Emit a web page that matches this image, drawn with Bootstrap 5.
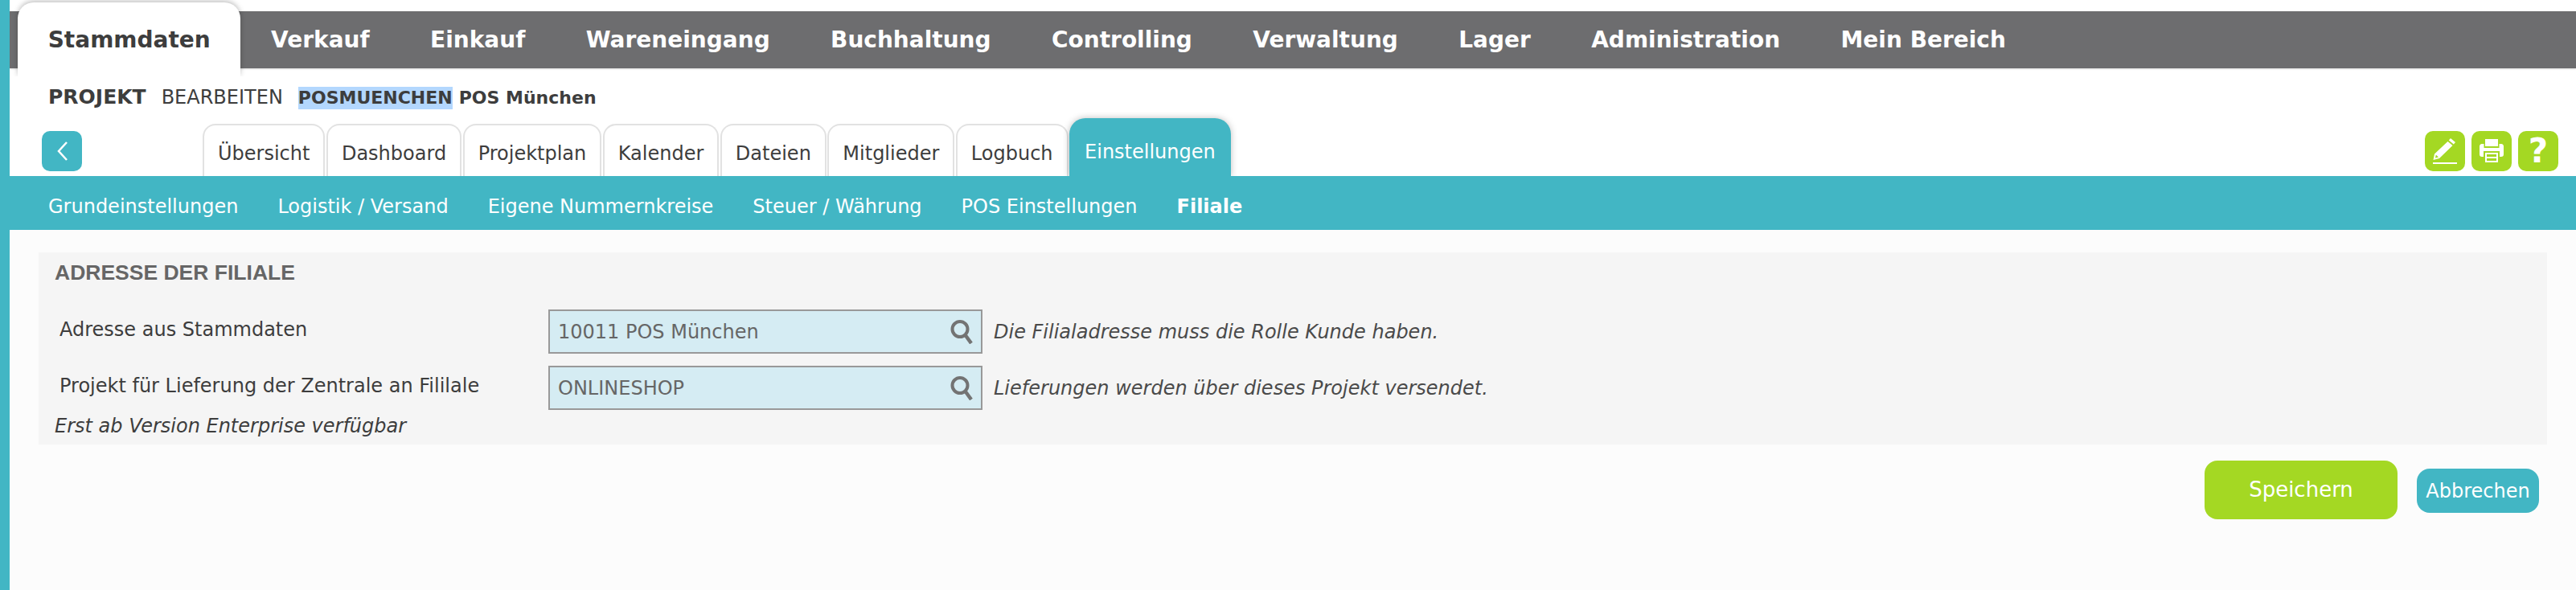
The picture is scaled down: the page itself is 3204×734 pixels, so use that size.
<!DOCTYPE html>
<html lang="de">
<head>
    <meta charset="UTF-8">
    <meta name="viewport" content="width=device-width, initial-scale=1.0">
    <title>Projekt bearbeiten</title>
    <link href="https://cdn.jsdelivr.net/npm/bootstrap@5.3.0/dist/css/bootstrap.min.css" rel="stylesheet">
    <style>
        html, body {
            height: 100%;
        }
        body {
            background-color: #fcfcfc;
            border-left: 12px solid #42b6c4;
            font-family: "DejaVu Sans", Verdana, sans-serif;
            font-size: 24px;
            color: #3d3d3d;
            overflow: hidden;
        }
        .head-zone {
            background-color: #fff;
            height: 219px;
            padding-top: 14px;
        }
        .main-menu {
            background-color: #6d6d6f;
            height: 71px;
            padding-left: 10px;
            box-shadow: 0 1px 2px rgba(0, 0, 0, 0.15);
            flex-wrap: nowrap;
        }
        .main-link {
            color: #fff;
            font-size: 28px;
            font-weight: 700;
            padding: 0 37.7px;
            line-height: 71px;
            text-decoration: none;
            white-space: nowrap;
        }
        .main-link.current {
            background-color: #fff;
            color: #3d3d3d;
            height: 92px;
            margin-top: -11px;
            line-height: 93px;
            border-radius: 20px 20px 0 0;
            box-shadow: 0 -2px 6px rgba(0, 0, 0, 0.25);
            clip-path: inset(-8px -8px 0 -8px);
        }
        .crumb {
            height: 48px;
            margin-top: 22px;
            padding-left: 48px;
            line-height: 28px;
            white-space: nowrap;
            align-items: baseline;
        }
        .crumb-title {
            font-size: 25px;
            font-weight: 700;
            margin-right: 19px;
        }
        .crumb-action {
            margin-right: 19px;
        }
        .crumb-sel {
            background-color: #b3d7fe;
            font-size: 22px;
            font-weight: 700;
            margin-right: 8px;
        }
        .crumb-name {
            font-size: 22px;
            font-weight: 700;
        }
        .tab-row {
            height: 72px;
            margin-top: -8px;
            padding-left: 40px;
            padding-right: 22px;
        }
        .square-btn {
            width: 50px;
            height: 50px;
            border-radius: 10px;
            padding: 0;
            border: 0;
        }
        .square-back {
            background-color: #42b6c4;
            margin-top: 16px;
        }
        .square-green {
            background-color: #a4d823;
            color: #fff;
            font-size: 42px;
            font-weight: 700;
            line-height: 50px;
        }
        .tool-group {
            margin-top: 16px;
        }
        .tab-list {
            margin-left: 150px;
            gap: 1.5px;
        }
        .tab-link {
            height: 65px;
            margin-top: 7px;
            padding: 0 17px;
            line-height: 70px;
            font-size: 24px;
            color: #3d3d3d;
            background-color: #fff;
            text-decoration: none;
            border: 2px solid #e2e2e2;
            border-bottom: 0;
            border-radius: 16px 16px 0 0;
            white-space: nowrap;
        }
        .tab-link.current {
            height: 72px;
            margin-top: 0;
            line-height: 84px;
            background-color: #42b6c4;
            color: #fff;
            border: 0;
            border-radius: 20px 20px 0 0;
            box-shadow: 0 0 8px rgba(0, 0, 0, 0.25);
            clip-path: inset(-8px -8px 0 -8px);
            padding: 0 19px;
        }
        .sub-menu {
            background-color: #42b6c4;
            height: 67px;
            padding-left: 48px;
            padding-top: 8px;
            gap: 49px;
            align-items: center;
        }
        .sub-link {
            color: #fff;
            font-size: 24px;
            text-decoration: none;
            white-space: nowrap;
        }
        .sub-link.current {
            font-weight: 700;
        }
        .form-panel {
            background-color: #f5f5f5;
            margin: 28px 36px 0 36px;
            height: 239px;
            padding: 0 20px;
        }
        .panel-title {
            font-family: "Liberation Sans", Arial, sans-serif;
            font-size: 26.5px;
            font-weight: 700;
            color: #666;
            line-height: 30px;
            padding-top: 10px;
            height: 71px;
            margin: 0;
        }
        .field-row {
            height: 55px;
            margin-bottom: 15px;
        }
        .field-label {
            width: 614px;
            padding-left: 6px;
            margin: -6px 0 0 0;
            font-size: 24px;
        }
        .lookup {
            width: 540px;
            height: 55px;
            background-color: #d5ecf3;
            border: 2px solid #999;
            padding: 0 10px;
            color: #666;
        }
        .field-hint {
            margin-left: 14px;
            font-style: italic;
            color: #4a4a4a;
        }
        .panel-note {
            font-style: italic;
            margin-top: -10px;
            line-height: 30px;
        }
        .action-row {
            margin: 20px 46px 0 0;
            gap: 24px;
        }
        .btn-save {
            background-color: #a4d823;
            color: #fff;
            width: 240px;
            height: 73px;
            border: 0;
            border-radius: 16px;
            font-size: 26px;
        }
        .btn-abort {
            background-color: #42b6c4;
            color: #fff;
            width: 152px;
            height: 55px;
            border: 0;
            border-radius: 16px;
            font-size: 24px;
            padding: 0;
            margin-top: 10px;
        }
    </style>
</head>
<body>

<div class="head-zone">
    <nav class="main-menu d-flex">
        <a class="main-link current" href="#">Stammdaten</a>
        <a class="main-link" href="#">Verkauf</a>
        <a class="main-link" href="#">Einkauf</a>
        <a class="main-link" href="#">Wareneingang</a>
        <a class="main-link" href="#">Buchhaltung</a>
        <a class="main-link" href="#">Controlling</a>
        <a class="main-link" href="#">Verwaltung</a>
        <a class="main-link" href="#">Lager</a>
        <a class="main-link" href="#">Administration</a>
        <a class="main-link" href="#">Mein Bereich</a>
    </nav>

    <div class="crumb d-flex">
        <span class="crumb-title">PROJEKT</span>
        <span class="crumb-action">BEARBEITEN</span>
        <span class="crumb-sel">POSMUENCHEN</span>
        <span class="crumb-name">POS München</span>
    </div>

    <div class="tab-row d-flex justify-content-between">
        <div class="d-flex">
            <button type="button" class="square-btn square-back d-flex align-items-center justify-content-center">
                <svg width="16" height="24" viewBox="0 0 16 24"><path d="M14 1 4 12l10 11" fill="none" stroke="#fff" stroke-width="2.500"/></svg>
            </button>
            <div class="tab-list d-flex">
                <a class="tab-link" href="#">Übersicht</a>
                <a class="tab-link" href="#">Dashboard</a>
                <a class="tab-link" href="#">Projektplan</a>
                <a class="tab-link" href="#">Kalender</a>
                <a class="tab-link" href="#">Dateien</a>
                <a class="tab-link" href="#">Mitglieder</a>
                <a class="tab-link" href="#">Logbuch</a>
                <a class="tab-link current" href="#">Einstellungen</a>
            </div>
        </div>
        <div class="tool-group d-flex gap-2">
            <button type="button" class="square-btn square-green d-flex align-items-center justify-content-center">
                <svg width="36" height="34" viewBox="0 0 36 34" fill="#fff">
                    <path d="M25 1 31 6 28.800 8.500 22.800 3.500ZM21.500 5 27.500 10 11 26 3.500 28 5 20.500ZM6.800 21.500 6 25.500 10 24.500Z" fill-rule="evenodd"/>
                    <rect x="3" y="31" width="30" height="2"/>
                </svg>
            </button>
            <button type="button" class="square-btn square-green d-flex align-items-center justify-content-center">
                <svg width="32" height="30" viewBox="0 0 32 30" fill="#fff">
                    <rect x="8" y="0" width="16" height="9"/>
                    <path d="M4 6H6.500V11H25.500V6H28C30 6 31 7.500 31 9V19C31 21 30 22 28 22H26V15H6V22H4C2 22 1 21 1 19V9C1 7.500 2 6 4 6Z"/>
                    <path d="M8 17H24V29H8ZM10 19V22H22V19ZM10 24V27H22V24Z" fill-rule="evenodd"/>
                </svg>
            </button>
            <button type="button" class="square-btn square-green d-flex align-items-center justify-content-center">?</button>
        </div>
    </div>
</div>

<nav class="sub-menu d-flex">
    <a class="sub-link" href="#">Grundeinstellungen</a>
    <a class="sub-link" href="#">Logistik / Versand</a>
    <a class="sub-link" href="#">Eigene Nummernkreise</a>
    <a class="sub-link" href="#">Steuer / Währung</a>
    <a class="sub-link" href="#">POS Einstellungen</a>
    <a class="sub-link current" href="#">Filiale</a>
</nav>

<div class="form-panel">
    <h2 class="panel-title">ADRESSE DER FILIALE</h2>
    <div class="field-row d-flex align-items-center">
        <label class="field-label">Adresse aus Stammdaten</label>
        <div class="lookup d-flex align-items-center justify-content-between">
            <span>10011 POS München</span>
            <svg width="28" height="30" viewBox="0 0 28 30"><circle cx="12" cy="11.500" r="9.500" fill="none" stroke="#737373" stroke-width="4"/><path d="M18 18 26 29" stroke="#737373" stroke-width="4.500"/></svg>
        </div>
        <span class="field-hint">Die Filialadresse muss die Rolle Kunde haben.</span>
    </div>
    <div class="field-row d-flex align-items-center">
        <label class="field-label">Projekt für Lieferung der Zentrale an Fililale</label>
        <div class="lookup d-flex align-items-center justify-content-between">
            <span>ONLINESHOP</span>
            <svg width="28" height="30" viewBox="0 0 28 30"><circle cx="12" cy="11.500" r="9.500" fill="none" stroke="#737373" stroke-width="4"/><path d="M18 18 26 29" stroke="#737373" stroke-width="4.500"/></svg>
        </div>
        <span class="field-hint">Lieferungen werden über dieses Projekt versendet.</span>
    </div>
    <div class="panel-note">Erst ab Version Enterprise verfügbar</div>
</div>

<div class="action-row d-flex justify-content-end align-items-start">
    <button type="button" class="btn btn-save">Speichern</button>
    <button type="button" class="btn btn-abort">Abbrechen</button>
</div>

<script src="https://cdn.jsdelivr.net/npm/bootstrap@5.3.0/dist/js/bootstrap.bundle.min.js"></script>
</body>
</html>
